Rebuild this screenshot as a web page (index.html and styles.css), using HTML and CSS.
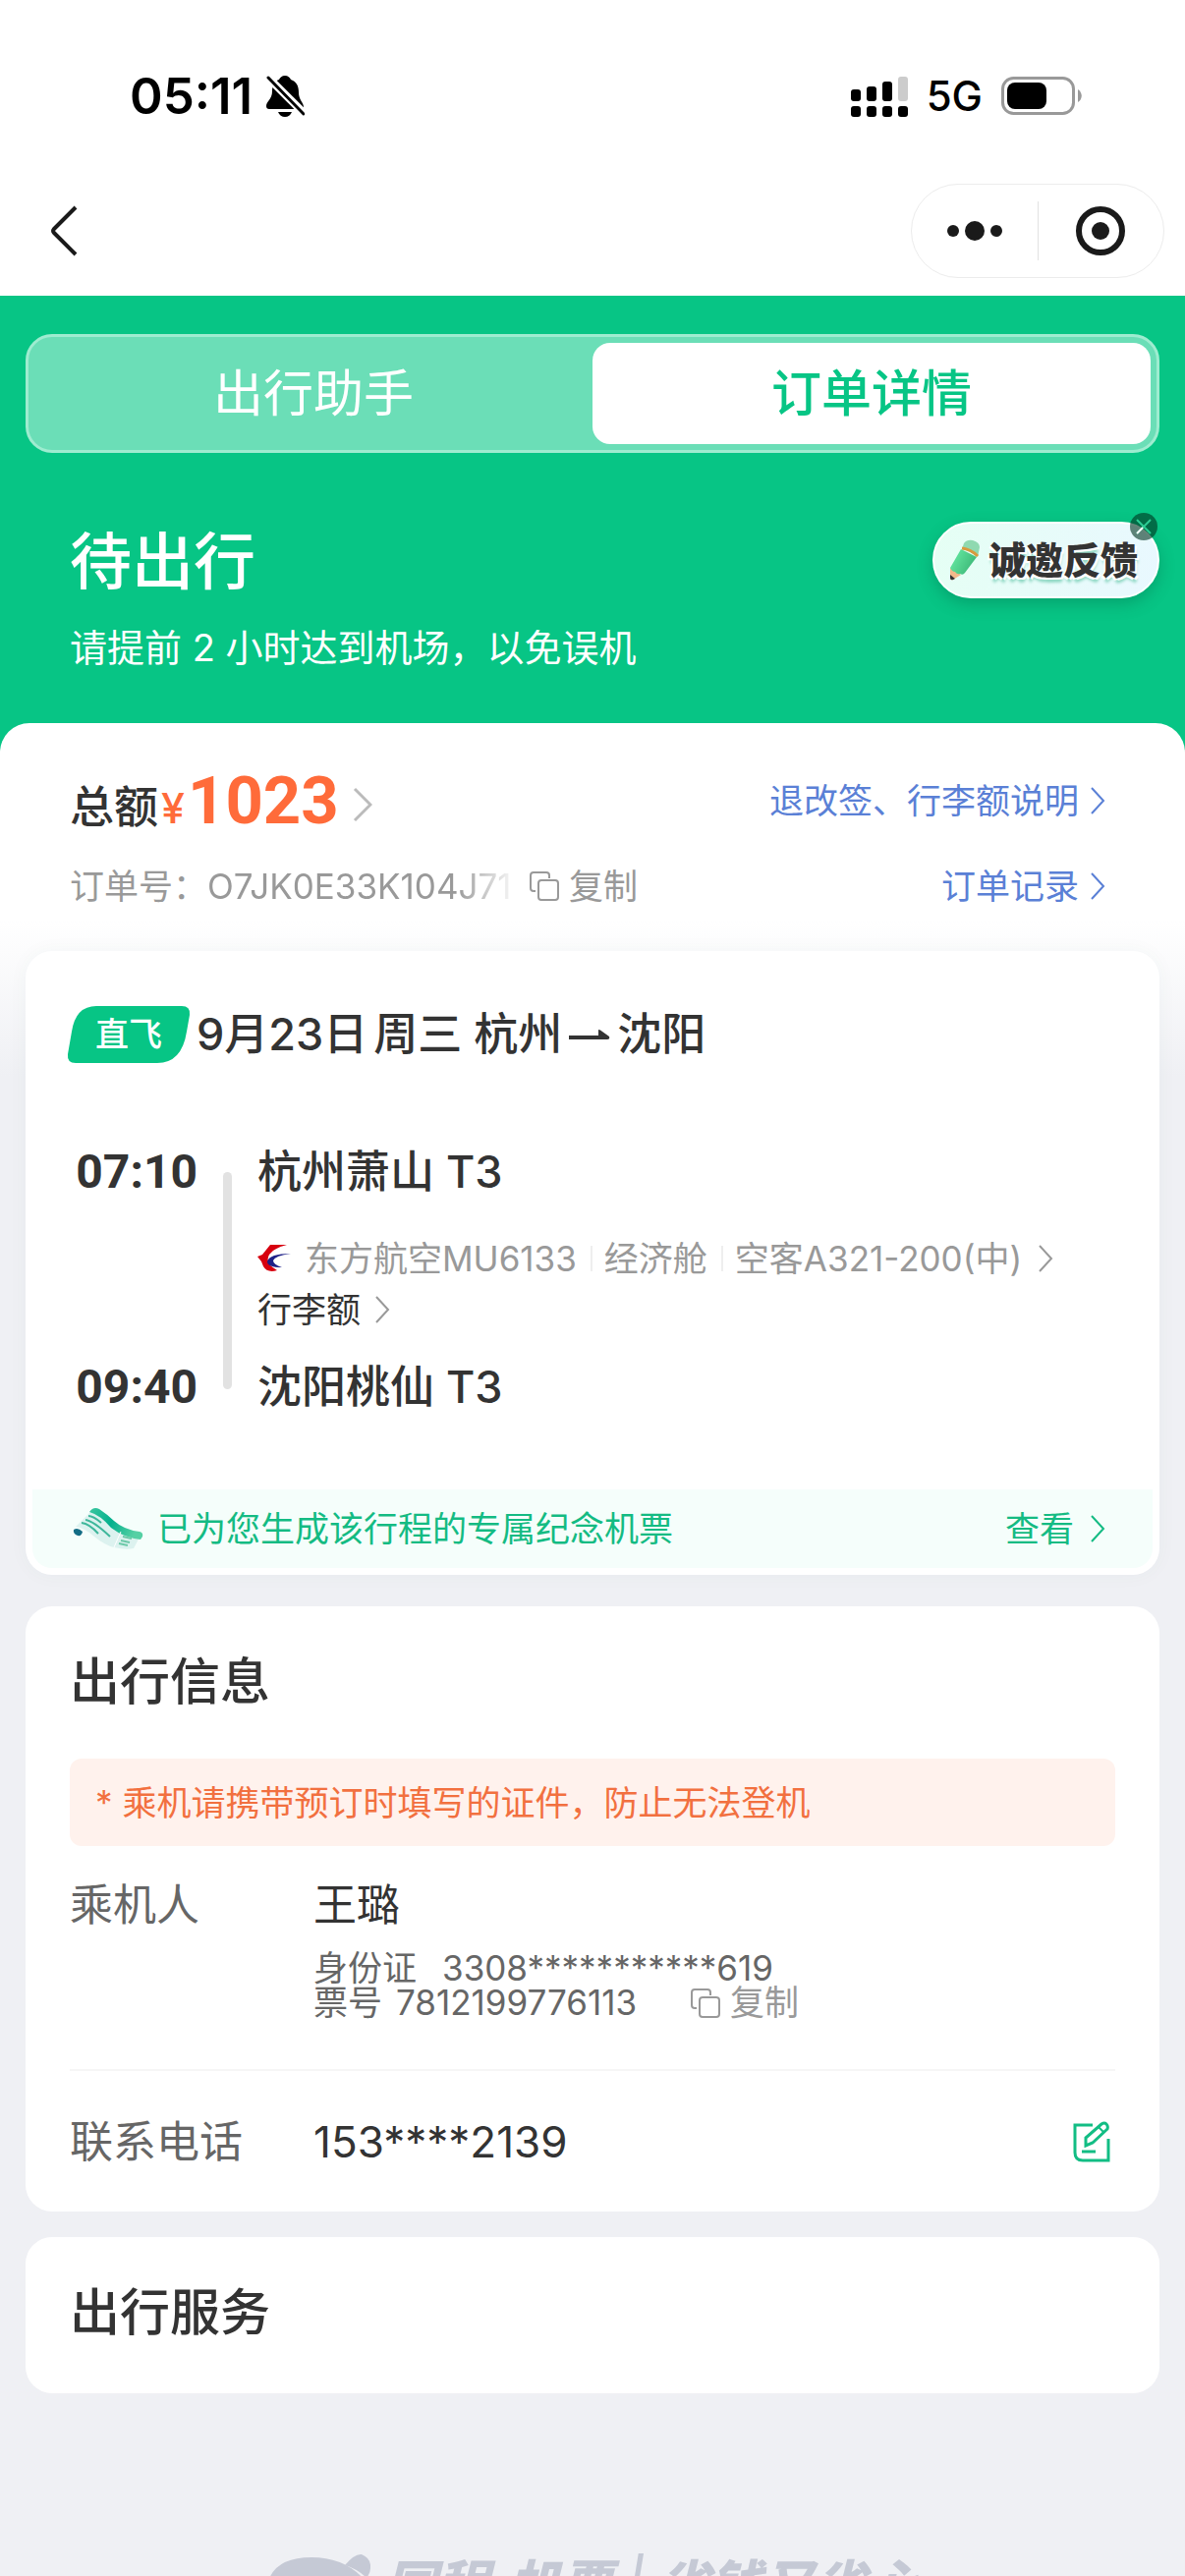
FILE: index.html
```html
<!DOCTYPE html>
<html lang="zh-CN">
<head>
  <meta charset="UTF-8">
  <meta name="viewport" content="width=device-width, initial-scale=1.0">
  <title>订单详情</title>
  <link rel="stylesheet" href="styles.css">
</head>
<body>
  <!-- 状态栏 -->
  <div class="status-bar">
    <div class="status-left">
      <span class="time">05:11</span>
      <svg class="bell" width="40" height="44" viewBox="0 0 40 44">
        <path d="M20 1c3 0 5 2 6 4 6 2 8 7 8 13 0 8 5 10 5 15 0 2-1 2-3 2H4c-2 0-3-1-3-3 0-5 6-7 6-15 0-6 2-10 7-12 1-2 3-4 6-4z"/>
        <path d="M13 38h14c-1 3-4 5-7 5s-6-2-7-5z"/>
        <path d="M1 1l40 40" stroke="#fff" stroke-width="8"/>
        <path d="M3 3l36 37" stroke="#000" stroke-width="3" stroke-linecap="round"/>
      </svg>
    </div>
    <div class="status-right">
      <svg width="58" height="41" viewBox="0 0 58 41">
        <rect x="0" y="13" width="10" height="12" rx="3"/>
        <rect x="16" y="10" width="10" height="15" rx="3"/>
        <rect x="32" y="5" width="10" height="20" rx="3"/>
        <rect x="48" y="0" width="10" height="25" rx="3" fill="#ccc"/>
        <rect x="0" y="30" width="10" height="11" rx="3"/>
        <rect x="16" y="30" width="10" height="11" rx="3"/>
        <rect x="32" y="30" width="10" height="11" rx="3"/>
        <rect x="48" y="30" width="10" height="11" rx="3"/>
      </svg>
      <span class="network">5G</span>
      <svg width="82" height="40" viewBox="0 0 82 40">
        <rect x="1.5" y="1.5" width="72" height="36" rx="11" fill="none" stroke="#999" stroke-width="3"/>
        <rect x="6" y="6" width="40" height="27" rx="8"/>
        <path d="M78 13c5 3 5 10 0 13z" fill="#999"/>
      </svg>
    </div>
  </div>

  <!-- 导航栏 -->
  <header class="nav">
    <button class="back" aria-label="返回">
      <svg width="28" height="52" viewBox="0 0 28 52"><path d="M26 2L4 24q-2 2 0 4l22 22" fill="none" stroke="#1a1a1a" stroke-width="4"/></svg>
    </button>
    <div class="capsule">
      <button aria-label="更多">
        <svg width="56" height="20" viewBox="0 0 56 20" fill="#1a1a1a"><circle cx="6" cy="10" r="6"/><circle cx="28" cy="10" r="10"/><circle cx="50" cy="10" r="6"/></svg>
      </button>
      <button aria-label="关闭">
        <svg width="52" height="52" viewBox="0 0 52 52"><circle cx="26" cy="26" r="22" fill="none" stroke="#1a1a1a" stroke-width="6"/><circle cx="26" cy="26" r="9" fill="#1a1a1a"/></svg>
      </button>
    </div>
  </header>

  <section class="hero">
    <div class="tabs">
      <button class="tab">出行助手</button>
      <button class="tab active">订单详情</button>
    </div>
    <div class="trip-status">
      <div>
        <h1>待出行</h1>
        <p>请提前 2 小时达到机场，以免误机</p>
      </div>
      <div class="feedback-wrap">
        <button class="feedback">
          <svg width="32" height="42" viewBox="0 0 32 42">
            <defs>
              <linearGradient id="pencil" x1="0" y1="0" x2="1" y2="0.5">
                <stop offset="0" stop-color="#6cf0a8"/>
                <stop offset="1" stop-color="#3cb878"/>
              </linearGradient>
            </defs>
            <path d="M1 29L12 36 4 41q-3 1-3-2z" fill="#f2b98a"/>
            <path d="M1 36l5 4-2 1q-3 1-3-2z" fill="#333"/>
            <path d="M12 10L28 18 16 34q-2 3-5 1-3 1-5-2-3 0-5-4z" fill="url(#pencil)"/>
            <path d="M15 4q3-4 9-3 7 2 7 7l-2 10q-7-6-16-8z" fill="#8fd9b0"/>
            <path d="M13 9q9 1 16 8" fill="none" stroke="#d99a3d" stroke-width="3"/>
          </svg>
          <span>诚邀反馈</span>
        </button>
        <button class="feedback-close" aria-label="关闭反馈">
          <svg width="28" height="28" viewBox="0 0 28 28"><path d="M7 7l14 14M21 7L7 21" stroke="#2ccc94" stroke-width="2"/><path d="M7 21l6-6" stroke="#fff" stroke-width="2"/></svg>
        </button>
      </div>
    </div>
  </section>

  <main class="sheet">
    <!-- 订单金额 -->
    <section class="summary">
      <div class="summary-row">
        <a class="total" href="#">
          <span class="total-label">总额</span><span class="yen">¥</span><span class="price">1023</span>
          <svg width="20" height="36" viewBox="0 0 20 36"><path d="M2 2l16 16L2 34" fill="none" stroke="#bbb" stroke-width="3"/></svg>
        </a>
        <a class="link" href="#">退改签、行李额说明
          <svg width="16" height="28" viewBox="0 0 16 28"><path d="M2 1l12 13L2 27" fill="none" stroke="currentColor" stroke-width="2"/></svg>
        </a>
      </div>
      <div class="summary-row">
        <div class="order-no">
          <span>订单号：</span>
          <span class="order-code">O7JK0E33K104J71</span>
          <button class="copy">
            <svg width="30" height="30" viewBox="0 0 30 30" fill="none" stroke="currentColor" stroke-width="2"><path d="M20 7V4q0-3-3-3H4Q1 1 1 4v13q0 3 3 3h2"/><rect x="9" y="9" width="20" height="20" rx="3"/></svg>
            复制
          </button>
        </div>
        <a class="link" href="#">订单记录
          <svg width="16" height="28" viewBox="0 0 16 28"><path d="M2 1l12 13L2 27" fill="none" stroke="currentColor" stroke-width="2"/></svg>
        </a>
      </div>
    </section>

    <!-- 航班信息 -->
    <section class="card flight">
      <h2 class="flight-title">
        <span class="badge">
          <svg class="badge-bg" viewBox="0 0 126 58" preserveAspectRatio="none"><path d="M30 0H117q9 0 8 9l-3 17q-5 32-30 32H9Q0 58 1 49L5 26Q9 0 30 0z" fill="#07c585"/></svg>
          <span class="badge-text">直飞</span>
        </span>
        <span>9月23日</span>
        <span>周三</span>
        <span class="route">杭州
          <svg width="42" height="10" viewBox="0 0 42 10"><path d="M30 0q2 0 4 2l7 5q1 3-2 3H0V6h30z" fill="#333"/></svg>
          沈阳</span>
      </h2>
      <div class="timeline">
        <div class="times">
          <time>07:10</time>
          <time>09:40</time>
        </div>
        <div class="line"></div>
        <div class="stops">
          <div class="airport">杭州萧山 T3</div>
          <a class="plane" href="#">
            <svg class="airline" width="34" height="28" viewBox="0 0 34 28">
              <path d="M13 0H30Q17 3 12 10q-5 9 8 16-10 3-14-4L4 17l-4-5 5-2z" fill="#d7000f"/>
              <path d="M34 9Q18 11 16 16q0 4 9 7Q10 23 10 17q2-8 24-8z" fill="#1d2088"/>
            </svg>
            <span>东方航空MU6133</span>
            <span>经济舱</span>
            <span>空客A321-200(中)</span>
            <svg width="16" height="28" viewBox="0 0 16 28"><path d="M2 1l12 13L2 27" fill="none" stroke="#999" stroke-width="2"/></svg>
          </a>
          <a class="baggage" href="#">行李额
            <svg width="16" height="28" viewBox="0 0 16 28"><path d="M2 1l12 13L2 27" fill="none" stroke="#999" stroke-width="2"/></svg>
          </a>
          <div class="airport">沈阳桃仙 T3</div>
        </div>
      </div>
      <a class="souvenir" href="#">
        <svg width="72" height="44" viewBox="0 0 72 44">
          <defs>
            <linearGradient id="ticket" x1="0" y1="0" x2="1" y2="0.3">
              <stop offset="0" stop-color="#3cc7a0"/>
              <stop offset="0.5" stop-color="#04b08d"/>
              <stop offset="1" stop-color="#55d0a4"/>
            </linearGradient>
          </defs>
          <path d="M3 20L18 5q10 1 18 10t34 12L62 42q-8 2-20-1-9-2-20-11Q12 21 3 20z" fill="#dcf2ef"/>
          <path d="M17 5q4-6 10-3 9 6 15 12 10 9 26 11 4 1 3 5l-2 3q-17-2-30-12Q28 8 17 5z" fill="url(#ticket)"/>
          <path d="M16 9q5 0 13 7M13 13q8 1 25 17M9 16q8 1 17 11" fill="none" stroke="#3eb79b" stroke-width="2"/>
          <path d="M49 25l-7 16" stroke="#fff" stroke-width="1"/>
          <path d="M51 30l9 2M49 34l9 2M47 37l9 2" stroke="#6cc9a8" stroke-width="2"/>
          <path d="M1 23q4-3 9 2-1 5-5 4-5-2-4-6z" fill="#146d85"/>
        </svg>
        <span>已为您生成该行程的专属纪念机票</span>
        <span class="view">查看</span>
        <svg width="16" height="28" viewBox="0 0 16 28"><path d="M2 1l12 13L2 27" fill="none" stroke="currentColor" stroke-width="2"/></svg>
      </a>
    </section>

    <!-- 出行信息 -->
    <section class="card info">
      <h2>出行信息</h2>
      <p class="notice">* 乘机请携带预订时填写的证件，防止无法登机</p>
      <div class="row passenger">
        <span class="label">乘机人</span>
        <div class="value">
          <div>王璐</div>
          <div class="docs">
            <div class="doc id-card"><span>身份证</span><span>3308***********619</span></div>
            <div class="doc"><span>票号</span><span>7812199776113</span>
              <button class="copy ticket-copy">
                <svg width="30" height="30" viewBox="0 0 30 30" fill="none" stroke="currentColor" stroke-width="2"><path d="M20 7V4q0-3-3-3H4Q1 1 1 4v13q0 3 3 3h2"/><rect x="9" y="9" width="20" height="20" rx="3"/></svg>
                复制
              </button>
            </div>
          </div>
        </div>
      </div>
      <div class="row phone">
        <span class="label">联系电话</span>
        <span class="value">153****2139</span>
        <button class="edit" aria-label="修改电话">
          <svg width="38" height="42" viewBox="0 0 38 42" fill="none" stroke="#12bd84" stroke-width="3">
            <path d="M20 4H2v28q0 8 8 8h26V18"/>
            <path d="M13 25v-8L29 3q3-2 5 0t1 5L20 22z"/>
            <path d="M26 6l6 6" stroke-width="2"/>
            <path d="M9 31h14"/>
          </svg>
        </button>
      </div>
    </section>

    <section class="card service">
      <h2>出行服务</h2>
    </section>

    <footer class="brand">
      <svg width="106" height="72" viewBox="0 0 106 72" fill="#c5c9d5">
        <path d="M0 40Q2 4 46 4q34 0 54 23l-2 30q-20 15-48 15Q4 72 0 40z"/>
        <path d="M80 12Q90 0 97 1q10 4 9 14 0 5-4 10Q93 16 80 12z"/>
        <ellipse cx="15" cy="31" rx="5" ry="2" fill="#eff0f4"/>
      </svg>
      <span>同程·机票</span>
      <span class="bar">|</span>
      <span>省钱又省心</span>
    </footer>
  </main>
</body>
</html>
```
FILE: styles.css
```css
* {
  box-sizing: border-box;
}
html {
  height: 100%;
  overflow: hidden;
}
body {
  height: 100%;
  margin: 0;
  overflow: hidden;
  background: #eff0f4;
  color: #333;
  font-family: Inter, "Noto Sans CJK SC", sans-serif;
  font-size: 35px;
  line-height: 48px;
}
h1, h2, p {
  margin: 0;
  font-weight: 500;
}
button {
  padding: 0;
  border: none;
  background: none;
  color: inherit;
  font: inherit;
}
a {
  color: inherit;
  text-decoration: none;
}
svg {
  display: block;
  flex: none;
}

/* 状态栏 */
.status-bar {
  display: flex;
  justify-content: space-between;
  padding: 63px 105px 0 132px;
  background: #fff;
  color: #000;
  line-height: 70px;
}
.status-left, .status-right {
  display: flex;
  align-items: center;
}
.status-left {
  gap: 13px;
}
.status-right {
  gap: 19px;
}
.time {
  font-size: 51px;
  font-weight: 600;
}
.network {
  font-size: 42px;
  font-weight: 500;
}

/* 导航栏 */
.nav {
  display: flex;
  justify-content: space-between;
  align-items: center;
  padding: 54px 21px 18px 51px;
  background: #fff;
}
.capsule {
  display: flex;
  align-items: center;
  width: 258px;
  height: 96px;
  border: 1px solid #ececec;
  border-radius: 48px;
}
.capsule button {
  display: flex;
  flex: 1;
  justify-content: center;
  align-items: center;
  height: 60px;
}
.capsule button + button {
  border-left: 1px solid #e2e2e2;
}

/* 顶部绿色区域 */
.hero {
  padding: 39px 26px 81px;
  background: #07c585;
  color: #fff;
}
.tabs {
  display: flex;
  padding: 6px;
  border: 3px solid #9eecd0;
  border-radius: 27px;
  background: #6bdeb7;
}
.tab {
  flex: 1;
  height: 103px;
  border-radius: 18px;
  font-size: 51px;
}
.tab.active {
  background: #fff;
  color: #07c585;
  font-weight: 500;
}
.trip-status {
  display: flex;
  justify-content: space-between;
  align-items: flex-start;
  padding: 70px 0 0 45px;
}
.trip-status h1 {
  font-size: 63px;
  line-height: 80px;
}
.trip-status p {
  margin-top: 22px;
  font-size: 38px;
  font-weight: 400;
  line-height: 52px;
}
.feedback-wrap {
  position: relative;
}
.feedback {
  display: flex;
  align-items: center;
  gap: 8px;
  height: 78px;
  padding: 0 20px 0 15px;
  border: 2px solid #fff;
  border-radius: 39px;
  background: linear-gradient(100deg, #e5fff4, #e9f8ff);
  box-shadow: 0 6px 16px rgba(0, 90, 60, 0.3);
  color: #333;
  font-size: 38px;
  font-weight: 900;
  text-shadow: 2px 2px 0 #fff, -2px 2px 0 #fff, 1px 5px 3px #8fd8c4;
}
.feedback-close {
  position: absolute;
  top: -9px;
  right: 2px;
  border-radius: 50%;
  background: rgba(0, 50, 30, 0.6);
}

/* 内容区 */
.sheet {
  margin-top: -30px;
  padding: 0 26px;
  border-radius: 30px 30px 0 0;
  background: linear-gradient(#fff 0, #fff 200px, #eff0f4 360px);
}
.summary {
  padding: 37px 55px 42px 45px;
}
.summary-row {
  display: flex;
  justify-content: space-between;
  align-items: flex-start;
}
.summary-row + .summary-row {
  margin-top: 14px;
}
.total {
  display: flex;
  align-items: baseline;
  line-height: 84px;
}
.total + .link {
  line-height: 84px;
}
.total-label {
  font-size: 45px;
  font-weight: 500;
}
.total svg {
  align-self: center;
  margin-left: 14px;
}
.yen {
  margin: 0 3px;
  color: #ff6b3a;
  font-size: 43px;
  font-weight: 500;
}
.price {
  color: #ff6b3a;
  font-family: Roboto, sans-serif;
  font-size: 67px;
  font-weight: 700;
}
.link {
  display: flex;
  align-items: center;
  gap: 11px;
  color: #5a80d6;
}
.order-no {
  display: flex;
  align-items: center;
  color: #999;
}
.order-code {
  overflow: hidden;
  width: 316px;
  -webkit-mask-image: linear-gradient(90deg, #000 80%, transparent);
  mask-image: linear-gradient(90deg, #000 80%, transparent);
}
.copy {
  display: flex;
  align-items: center;
  gap: 10px;
  margin-left: 12px;
  color: #999;
}

/* 卡片 */
.card {
  border-radius: 27px;
  background: #fff;
}
.card h2 {
  font-size: 51px;
  line-height: 72px;
}
.flight {
  padding: 55px 7px 7px;
  box-shadow: 0 0 20px rgba(7, 100, 80, 0.04);
}
.card .flight-title {
  display: flex;
  align-items: center;
  gap: 6px;
  padding-left: 35px;
  font-size: 45px;
  line-height: 60px;
}
.badge {
  position: relative;
  padding: 0 29px;
  color: #fff;
  font-size: 34px;
  line-height: 58px;
}
.badge-bg {
  position: absolute;
  inset: 0;
  width: 100%;
  height: 100%;
}
.badge-text {
  position: relative;
}
.route {
  display: flex;
  align-items: center;
  gap: 7px;
  margin-left: 6px;
}
.timeline {
  display: flex;
  padding: 80px 40px 0 42px;
}
.times {
  display: flex;
  flex-direction: column;
  justify-content: space-between;
  width: 126px;
  font-family: Roboto, sans-serif;
  font-size: 48px;
  font-weight: 700;
  line-height: 60px;
  text-align: right;
}
.line {
  width: 9px;
  margin: 30px 26px 28px;
  border-radius: 5px;
  background: #e2e2e2;
}
.airport {
  font-size: 45px;
  font-weight: 500;
  line-height: 60px;
}
.plane {
  display: flex;
  align-items: center;
  margin-top: 34px;
  color: #999;
}
.airline {
  margin-right: 14px;
}
.plane span + span {
  margin-left: 14px;
  padding-left: 14px;
  background: linear-gradient(#eee, #eee) left center / 2px 26px no-repeat;
}
.plane span + svg {
  margin-left: 16px;
}
.baggage {
  display: flex;
  align-items: center;
  gap: 14px;
  margin: 4px 0 25px;
}
.souvenir {
  display: flex;
  align-items: center;
  margin-top: 74px;
  padding: 16px 48px 16px 41px;
  border-radius: 0 0 20px 20px;
  background: #f5fefb;
  color: #14bb83;
}
.souvenir svg:first-child {
  margin-right: 14px;
}
.view {
  margin: 0 16px 0 auto;
}
.info {
  margin-top: 32px;
  padding: 41px 45px 0;
}
.notice {
  margin: 42px 0 30px;
  padding: 21px 26px 20px;
  border-radius: 12px;
  background: #fff2ed;
  color: #f2703f;
  font-weight: 400;
}
.row {
  display: flex;
  align-items: flex-start;
  font-size: 44px;
  line-height: 60px;
}
.label {
  width: 248px;
  color: #666;
}
.passenger {
  padding-bottom: 50px;
  border-bottom: 2px solid #f6f6f6;
}
.docs {
  margin-top: 17px;
  color: #666;
  font-size: 35px;
  line-height: 35px;
}
.doc {
  display: flex;
  align-items: center;
  gap: 14px;
}
.id-card {
  gap: 26px;
}
.ticket-copy {
  margin-left: 41px;
}
.phone {
  align-items: center;
  padding: 42px 5px 41px 0;
}
.edit {
  margin-left: auto;
}
.service {
  margin-top: 26px;
  padding: 41px 45px 46px;
}

/* 底部品牌 */
.brand {
  display: flex;
  justify-content: center;
  align-items: flex-start;
  gap: 14px;
  padding: 163px 0 40px;
  color: #c5c9d5;
  font-size: 53px;
  font-style: italic;
  font-weight: 900;
  line-height: 64px;
}
.bar {
  font-weight: 500;
}
```
